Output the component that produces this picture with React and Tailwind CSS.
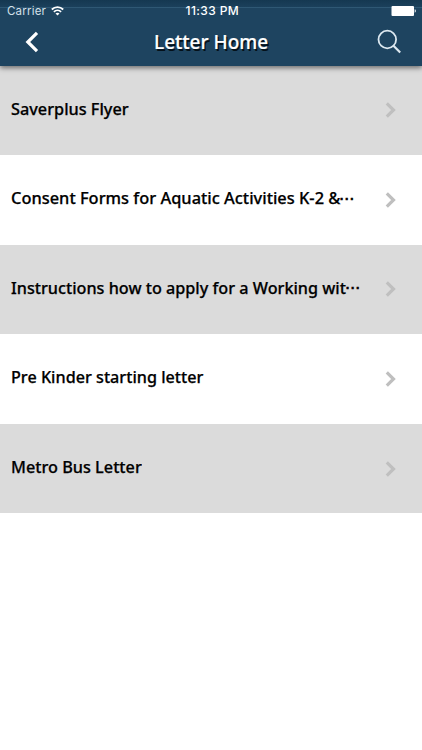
const letters = [
    { title: 'Saverplus Flyer', fit: 'scale-x-[0.957]' },
    { title: 'Consent Forms for Aquatic Activities K-2 &', fit: 'scale-x-[0.965]', cut: true },
    { title: 'Instructions how to apply for a Working wit', fit: 'scale-x-[0.953]', cut: true },
    { title: 'Pre Kinder starting letter', fit: 'scale-x-[0.952]' },
    { title: 'Metro Bus Letter', fit: 'scale-x-[0.956]' },
];

function StatusBar() {
    return (
        <div className="relative flex h-[22px] items-center justify-between pl-[7px] pr-[5px] font-[Inter] text-xs text-white">
            <div className="flex items-center gap-[5px]">
                <span className="pt-[2px] text-[#d3e0e9] text-[11.5px] tracking-[0.2px]">Carrier</span>
                <svg className="h-[10px] w-[13px]" viewBox="0 0 13 10" fill="none" stroke="white" strokeWidth="1.8">
                    <path d="M.8 3.5a8.2 8.2 0 0 1 11.4 0M2.9 5.9a5.2 5.2 0 0 1 7.2 0" />
                    <path d="M4.5 7.6a2.9 2.9 0 0 1 4 0l-2 2z" fill="white" stroke="none" />
                </svg>
            </div>
            <span className="absolute left-[185.5px] font-medium tracking-[0.4px]">11:33 PM</span>
            <svg className="h-[10px] w-[26px]" viewBox="0 0 26 10" fill="white">
                <rect x="0.5" width="22.5" height="10" rx="1" />
                <path d="M23.7 3.3c1.5.3 1.5 3.1 0 3.4z" />
            </svg>
        </div>
    );
}

function Header() {
    return (
        <header className="relative z-10 h-[65.5px] bg-[#1e4460] bg-[linear-gradient(#153851,#1b405b_7px,#2f5874_7px,#2f5874_8px,#1e4460_8px)] shadow-[0_2px_5px_rgba(0,0,0,0.5)]">
            <StatusBar />
            <div className="relative h-[43px]">
                <svg className="absolute left-[25px] top-[9px] h-[22px] w-[15px]" viewBox="0 0 15 22" fill="none" stroke="white" strokeWidth="3.2">
                    <path d="M12 1.8 2.8 11l9.2 9.2" />
                </svg>
                <h1 className="absolute left-[153.5px] top-[6px] origin-left scale-x-[0.95] whitespace-nowrap text-[20px] leading-[28px] font-medium text-white [-webkit-text-stroke:0.2px_white] [text-shadow:1.5px_1.5px_0.5px_#04111a]">
                    Letter Home
                </h1>
                <svg className="absolute left-[377px] top-[7px] h-[25px] w-[25px]" viewBox="0 0 25 25" fill="none" stroke="#dce8f0" strokeWidth="1.8">
                    <circle cx="10.3" cy="10.5" r="8.8" />
                    <path d="m16.5 16.8 6.7 6.7" strokeWidth="2.2" />
                </svg>
            </div>
        </header>
    );
}

export default function App() {
    return (
        <div className="h-[750px] w-[422px] overflow-hidden bg-white font-['Noto_Sans',sans-serif]">
            <Header />
            <ul>
                {letters.map((letter) => (
                    <li key={letter.title} className="flex h-[89.6px] items-center justify-between bg-white pl-[10.5px] pr-[25px] odd:bg-[#dbdbdb]">
                        <span className={`${letter.fit} -mt-[4px] flex origin-left items-center whitespace-nowrap text-[17px] font-medium text-black [-webkit-text-stroke:0.25px_black]`}>
                            {letter.title}
                            {letter.cut && <span className="-ml-px w-0 text-base [-webkit-text-stroke:0.7px_black]">⋯</span>}
                        </span>
                        <svg className="h-[16px] w-[12px] shrink-0" viewBox="0 0 12 16" fill="none" stroke="#bfbfbf" strokeWidth="3.2">
                            <path d="m1.8 1.3 6.7 6.7-6.7 6.7" />
                        </svg>
                    </li>
                ))}
            </ul>
        </div>
    );
}
